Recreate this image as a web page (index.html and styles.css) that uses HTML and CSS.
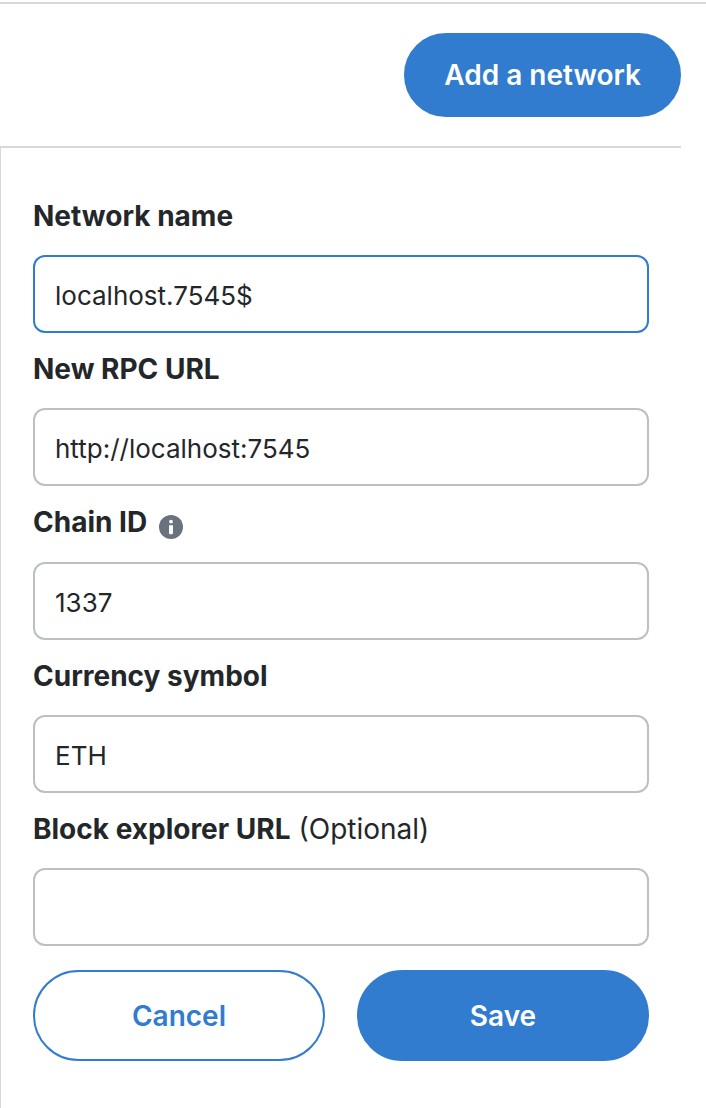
FILE: index.html
```html
<!DOCTYPE html>
<html lang="en">
<head>
<meta charset="utf-8">
<meta name="viewport" content="width=device-width, initial-scale=1">
<title>Networks</title>
<link rel="stylesheet" href="styles.css">
</head>
<body>
<main class="networks">
  <header class="header">
    <button class="button button-primary button-add" type="button">Add a network</button>
  </header>
  <form class="form">
    <div class="field">
      <div class="label-row"><label class="label" for="name">Network name</label></div>
      <input class="input input-active" id="name" type="text" value="localhost.7545$">
    </div>
    <div class="field">
      <div class="label-row"><label class="label" for="rpc">New RPC URL</label></div>
      <input class="input" id="rpc" type="text" value="http://localhost:7545">
    </div>
    <div class="field">
      <div class="label-row label-row-info">
        <label class="label" for="chain">Chain ID</label>
        <svg class="info" viewBox="0 0 24 24" role="img" aria-label="Info">
          <circle cx="12" cy="12" r="12" fill="#6a737d"/>
          <circle cx="12" cy="6.6" r="1.9" fill="#fff"/>
          <path d="M10 10.2h4v7.8q0 1.2-1.2 1.2h-1.6q-1.2 0-1.2-1.2z" fill="#fff"/>
        </svg>
      </div>
      <input class="input" id="chain" type="text" value="1337">
    </div>
    <div class="field">
      <div class="label-row"><label class="label" for="symbol">Currency symbol</label></div>
      <input class="input" id="symbol" type="text" value="ETH">
    </div>
    <div class="field">
      <div class="label-row"><label class="label" for="explorer">Block explorer URL</label><span class="optional">(Optional)</span></div>
      <input class="input" id="explorer" type="text">
    </div>
    <div class="actions">
      <button class="button button-secondary" type="button">Cancel</button>
      <button class="button button-primary" type="submit">Save</button>
    </div>
  </form>
</main>
</body>
</html>
```

FILE: styles.css
```css
* {
  box-sizing: border-box;
}

body {
  margin: 0;
  background: #fff;
  color: #24272a;
  font-family: Inter, "Liberation Sans", sans-serif;
  font-size: 28px;
  line-height: 40px;
}

.networks {
  display: flex;
  flex-direction: column;
  min-height: 100vh;
  padding-top: 2px;
}

.header {
  display: flex;
  justify-content: flex-end;
  margin-right: 25px;
  padding: 29px 0;
  border-bottom: 2px solid #d6d9dc;
}

.networks::before {
  content: "";
  height: 2px;
  background: #d6d9dc;
}

.form {
  flex: 1;
  padding: 32px 57px 47px 32px;
  border-left: 1px solid #d6d9dc;
}

.label-row {
  display: flex;
  align-items: center;
  gap: 8px;
  height: 75px;
  padding-bottom: 4px;
}

.label-row-info {
  gap: 12px;
  height: 76px;
}

.label {
  font-weight: 700;
}

.info {
  width: 24px;
  height: 24px;
  margin-top: 10px;
}

.input {
  display: block;
  width: 100%;
  height: 78px;
  padding: 2px 20px 0;
  border: 2px solid #bbc0c5;
  border-radius: 12px;
  background: #fff;
  color: inherit;
  font: inherit;
  font-size: 26px;
  outline: none;
}

.input-active,
.input:focus {
  border-color: #317ccf;
}

.actions {
  display: grid;
  grid-template-columns: 1fr 1fr;
  gap: 32px;
  margin-top: 24px;
}

.button {
  height: 91px;
  padding: 0 38px;
  border: 2px solid #317ccf;
  border-radius: 46px;
  font: inherit;
  font-weight: 600;
  cursor: pointer;
}

.button-primary {
  background: #317ccf;
  color: #fff;
}

.button-secondary {
  background: #fff;
  color: #317ccf;
}

.button-add {
  height: 84px;
}
```
